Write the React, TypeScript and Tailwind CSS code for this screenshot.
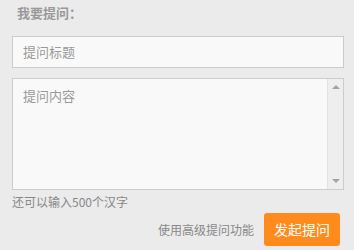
export default function App() {
  return (
    <div
      className="h-[250px] w-[354px] bg-[#ebebeb] pl-[12px] pr-[10px]"
      style={{ fontFamily: '"Noto Sans CJK SC", "Noto Sans", sans-serif' }}
    >
      <div className="h-[36px] pl-[5px] pt-[3px] text-[13px] font-bold leading-[20px] text-[#999]">
        我要提问：
      </div>
      <div className="flex h-[32px] items-center border border-[#ccc] bg-[#f9f9f9] pl-[10px] text-[13px] text-[#999]">
        提问标题
      </div>
      <div className="mt-[10px] flex h-[112px] border border-[#ccc] bg-[#f9f9f9]">
        <div className="flex-1 pl-[10px] pt-[7px] text-[13px] leading-[20px] text-[#999]">提问内容</div>
        <div className="flex w-[16px] flex-col items-center justify-between border-l border-[#e2e2e2] bg-[#eeeeee] py-[6px]">
          <div className="h-0 w-0 border-x-[4px] border-b-[4px] border-x-transparent border-b-[#a3a3a3]" />
          <div className="h-0 w-0 border-x-[4px] border-t-[4px] border-x-transparent border-t-[#a3a3a3]" />
        </div>
      </div>
      <div className="mt-[3px] text-[12px] leading-[18px] text-[#888]">还可以输入500个汉字</div>
      <div className="mt-[2px] flex items-center justify-end pr-[4px]">
        <span className="mr-[10px] text-[12px] text-[#888]">使用高级提问功能</span>
        <button className="h-[33px] w-[76px] rounded-[3px] bg-[#ff8b1c] text-[14px] text-white">发起提问</button>
      </div>
    </div>
  );
}
